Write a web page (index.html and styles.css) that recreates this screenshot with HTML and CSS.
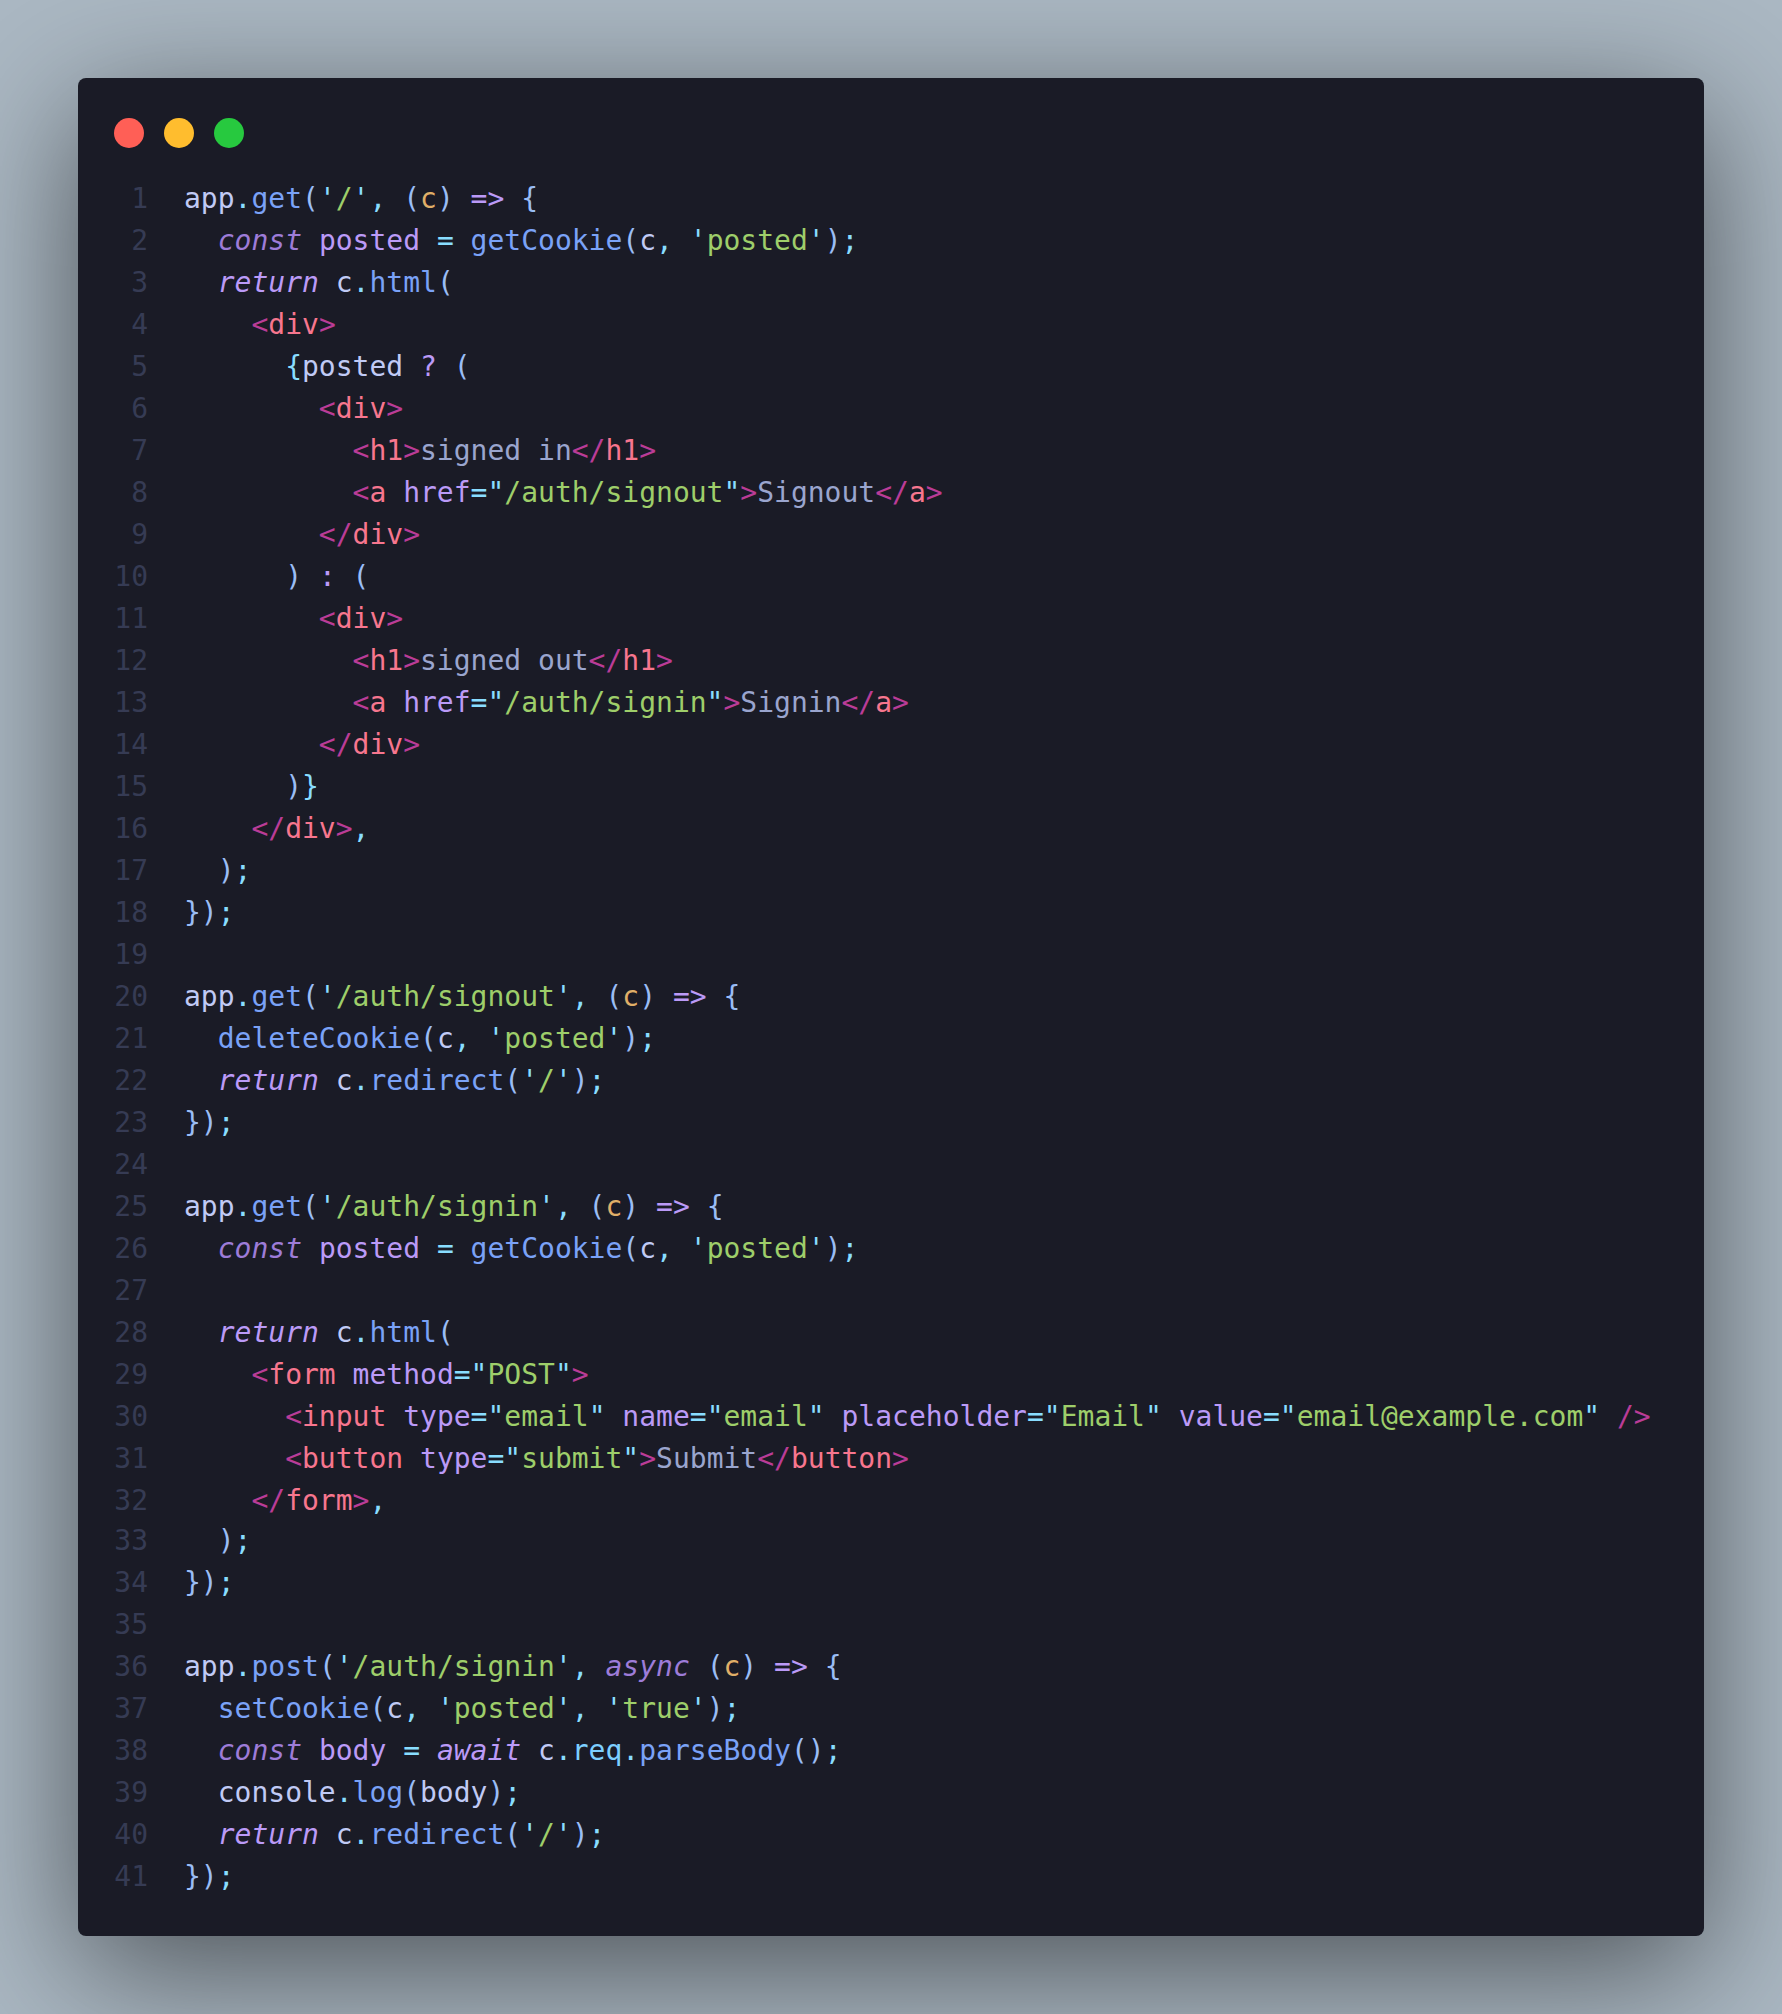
FILE: index.html
```html
<!DOCTYPE html>
<html lang="en">
<head>
<meta charset="utf-8">
<title>Code snippet</title>
<link rel="stylesheet" href="styles.css">
</head>
<body>
<main class="window">
<div class="dots"><span class="dot red"></span><span class="dot yellow"></span><span class="dot green"></span></div>
<div class="editor">
<div class="row"><span class="ln">1</span><span class="code">app<i class="c">.</i><i class="b">get</i><i class="p">(</i><i class="c">'</i><i class="g">/</i><i class="c">'</i><i class="c">,</i> <i class="p">(</i><i class="o">c</i><i class="p">)</i> <i class="m">=&gt;</i> <i class="p">{</i></span></div>
<div class="row"><span class="ln">2</span><span class="code">  <i class="k">const</i> <i class="m">posted</i> <i class="c">=</i> <i class="b">getCookie</i><i class="p">(</i>c<i class="c">,</i> <i class="c">'</i><i class="g">posted</i><i class="c">'</i><i class="p">)</i><i class="c">;</i></span></div>
<div class="row"><span class="ln">3</span><span class="code">  <i class="r">return</i> c<i class="c">.</i><i class="b">html</i><i class="p">(</i></span></div>
<div class="row"><span class="ln">4</span><span class="code">    <i class="t">&lt;</i><i class="n">div</i><i class="t">&gt;</i></span></div>
<div class="row"><span class="ln">5</span><span class="code">      <i class="c">{</i>posted <i class="m">?</i> <i class="p">(</i></span></div>
<div class="row"><span class="ln">6</span><span class="code">        <i class="t">&lt;</i><i class="n">div</i><i class="t">&gt;</i></span></div>
<div class="row"><span class="ln">7</span><span class="code">          <i class="t">&lt;</i><i class="n">h1</i><i class="t">&gt;</i><i class="x">signed in</i><i class="t">&lt;/</i><i class="n">h1</i><i class="t">&gt;</i></span></div>
<div class="row"><span class="ln">8</span><span class="code">          <i class="t">&lt;</i><i class="n">a</i> <i class="m">href</i><i class="c">="</i><i class="g">/auth/signout</i><i class="c">"</i><i class="t">&gt;</i><i class="x">Signout</i><i class="t">&lt;/</i><i class="n">a</i><i class="t">&gt;</i></span></div>
<div class="row"><span class="ln">9</span><span class="code">        <i class="t">&lt;/</i><i class="n">div</i><i class="t">&gt;</i></span></div>
<div class="row"><span class="ln">10</span><span class="code">      <i class="p">)</i> <i class="m">:</i> <i class="p">(</i></span></div>
<div class="row"><span class="ln">11</span><span class="code">        <i class="t">&lt;</i><i class="n">div</i><i class="t">&gt;</i></span></div>
<div class="row"><span class="ln">12</span><span class="code">          <i class="t">&lt;</i><i class="n">h1</i><i class="t">&gt;</i><i class="x">signed out</i><i class="t">&lt;/</i><i class="n">h1</i><i class="t">&gt;</i></span></div>
<div class="row"><span class="ln">13</span><span class="code">          <i class="t">&lt;</i><i class="n">a</i> <i class="m">href</i><i class="c">="</i><i class="g">/auth/signin</i><i class="c">"</i><i class="t">&gt;</i><i class="x">Signin</i><i class="t">&lt;/</i><i class="n">a</i><i class="t">&gt;</i></span></div>
<div class="row"><span class="ln">14</span><span class="code">        <i class="t">&lt;/</i><i class="n">div</i><i class="t">&gt;</i></span></div>
<div class="row"><span class="ln">15</span><span class="code">      <i class="p">)</i><i class="c">}</i></span></div>
<div class="row"><span class="ln">16</span><span class="code">    <i class="t">&lt;/</i><i class="n">div</i><i class="t">&gt;</i><i class="c">,</i></span></div>
<div class="row"><span class="ln">17</span><span class="code">  <i class="p">)</i><i class="c">;</i></span></div>
<div class="row"><span class="ln">18</span><span class="code"><i class="p">})</i><i class="c">;</i></span></div>
<div class="row"><span class="ln">19</span><span class="code"></span></div>
<div class="row"><span class="ln">20</span><span class="code">app<i class="c">.</i><i class="b">get</i><i class="p">(</i><i class="c">'</i><i class="g">/auth/signout</i><i class="c">'</i><i class="c">,</i> <i class="p">(</i><i class="o">c</i><i class="p">)</i> <i class="m">=&gt;</i> <i class="p">{</i></span></div>
<div class="row"><span class="ln">21</span><span class="code">  <i class="b">deleteCookie</i><i class="p">(</i>c<i class="c">,</i> <i class="c">'</i><i class="g">posted</i><i class="c">'</i><i class="p">)</i><i class="c">;</i></span></div>
<div class="row"><span class="ln">22</span><span class="code">  <i class="r">return</i> c<i class="c">.</i><i class="b">redirect</i><i class="p">(</i><i class="c">'</i><i class="g">/</i><i class="c">'</i><i class="p">)</i><i class="c">;</i></span></div>
<div class="row"><span class="ln">23</span><span class="code"><i class="p">})</i><i class="c">;</i></span></div>
<div class="row"><span class="ln">24</span><span class="code"></span></div>
<div class="row"><span class="ln">25</span><span class="code">app<i class="c">.</i><i class="b">get</i><i class="p">(</i><i class="c">'</i><i class="g">/auth/signin</i><i class="c">'</i><i class="c">,</i> <i class="p">(</i><i class="o">c</i><i class="p">)</i> <i class="m">=&gt;</i> <i class="p">{</i></span></div>
<div class="row"><span class="ln">26</span><span class="code">  <i class="k">const</i> <i class="m">posted</i> <i class="c">=</i> <i class="b">getCookie</i><i class="p">(</i>c<i class="c">,</i> <i class="c">'</i><i class="g">posted</i><i class="c">'</i><i class="p">)</i><i class="c">;</i></span></div>
<div class="row"><span class="ln">27</span><span class="code"></span></div>
<div class="row"><span class="ln">28</span><span class="code">  <i class="r">return</i> c<i class="c">.</i><i class="b">html</i><i class="p">(</i></span></div>
<div class="row"><span class="ln">29</span><span class="code">    <i class="t">&lt;</i><i class="n">form</i> <i class="m">method</i><i class="c">="</i><i class="g">POST</i><i class="c">"</i><i class="t">&gt;</i></span></div>
<div class="row"><span class="ln">30</span><span class="code">      <i class="t">&lt;</i><i class="n">input</i> <i class="m">type</i><i class="c">="</i><i class="g">email</i><i class="c">"</i> <i class="m">name</i><i class="c">="</i><i class="g">email</i><i class="c">"</i> <i class="m">placeholder</i><i class="c">="</i><i class="g">Email</i><i class="c">"</i> <i class="m">value</i><i class="c">="</i><i class="g">email@example.com</i><i class="c">"</i> <i class="t">/&gt;</i></span></div>
<div class="row"><span class="ln">31</span><span class="code">      <i class="t">&lt;</i><i class="n">button</i> <i class="m">type</i><i class="c">="</i><i class="g">submit</i><i class="c">"</i><i class="t">&gt;</i><i class="x">Submit</i><i class="t">&lt;/</i><i class="n">button</i><i class="t">&gt;</i></span></div>
<div class="row row-short"><span class="ln">32</span><span class="code">    <i class="t">&lt;/</i><i class="n">form</i><i class="t">&gt;</i><i class="c">,</i></span></div>
<div class="row"><span class="ln">33</span><span class="code">  <i class="p">)</i><i class="c">;</i></span></div>
<div class="row"><span class="ln">34</span><span class="code"><i class="p">})</i><i class="c">;</i></span></div>
<div class="row"><span class="ln">35</span><span class="code"></span></div>
<div class="row"><span class="ln">36</span><span class="code">app<i class="c">.</i><i class="b">post</i><i class="p">(</i><i class="c">'</i><i class="g">/auth/signin</i><i class="c">'</i><i class="c">,</i> <i class="k">async</i> <i class="p">(</i><i class="o">c</i><i class="p">)</i> <i class="m">=&gt;</i> <i class="p">{</i></span></div>
<div class="row"><span class="ln">37</span><span class="code">  <i class="b">setCookie</i><i class="p">(</i>c<i class="c">,</i> <i class="c">'</i><i class="g">posted</i><i class="c">'</i><i class="c">,</i> <i class="c">'</i><i class="g">true</i><i class="c">'</i><i class="p">)</i><i class="c">;</i></span></div>
<div class="row"><span class="ln">38</span><span class="code">  <i class="k">const</i> <i class="m">body</i> <i class="c">=</i> <i class="r">await</i> c<i class="c">.</i><i class="c2">req</i><i class="c">.</i><i class="b">parseBody</i><i class="p">()</i><i class="c">;</i></span></div>
<div class="row"><span class="ln">39</span><span class="code">  console<i class="c">.</i><i class="b">log</i><i class="p">(</i>body<i class="p">)</i><i class="c">;</i></span></div>
<div class="row"><span class="ln">40</span><span class="code">  <i class="r">return</i> c<i class="c">.</i><i class="b">redirect</i><i class="p">(</i><i class="c">'</i><i class="g">/</i><i class="c">'</i><i class="p">)</i><i class="c">;</i></span></div>
<div class="row"><span class="ln">41</span><span class="code"><i class="p">})</i><i class="c">;</i></span></div>
</div>
</main>
</body>
</html>
```

FILE: styles.css
```css
html, body {
  margin: 0;
  height: 100%;
}

body {
  box-sizing: border-box;
  min-height: 2014px;
  padding: 78px;
  background: #abb8c3;
  overflow: hidden;
}

.window {
  box-sizing: border-box;
  height: 1858px;
  padding: 40px 36px 37px;
  border-radius: 8px;
  background: #1a1b26;
  box-shadow: 0 34px 136px rgba(0, 0, 0, 0.56);
}

.dots {
  display: flex;
  gap: 20px;
  height: 30px;
  margin-bottom: 30px;
}

.dot {
  width: 30px;
  height: 30px;
  border-radius: 50%;
}

.red { background: #ff5f56; }
.yellow { background: #ffbd2e; }
.green { background: #27c93f; }

.editor {
  font-family: "DejaVu Sans Mono", monospace;
  font-size: 28px;
  line-height: 42px;
  color: #c0caf5;
}

.row {
  display: flex;
  gap: 36px;
  height: 42px;
}

.row-short {
  height: 40px;
}

.ln {
  flex: none;
  width: 34px;
  text-align: right;
  color: #363b54;
}

.code {
  white-space: pre;
}

.code i {
  font-style: normal;
}

.code .c { color: #89ddff; }
.code .c2 { color: #7dcfff; }
.code .b { color: #7aa2f7; }
.code .p { color: #9abdf5; }
.code .g { color: #9ece6a; }
.code .o { color: #e0af68; }
.code .m { color: #bb9af7; }
.code .k { color: #9d7cd8; font-style: italic; }
.code .r { color: #bb9af7; font-style: italic; }
.code .t { color: #ba3c97; }
.code .n { color: #f7768e; }
.code .x { color: #9aa5ce; }
```
